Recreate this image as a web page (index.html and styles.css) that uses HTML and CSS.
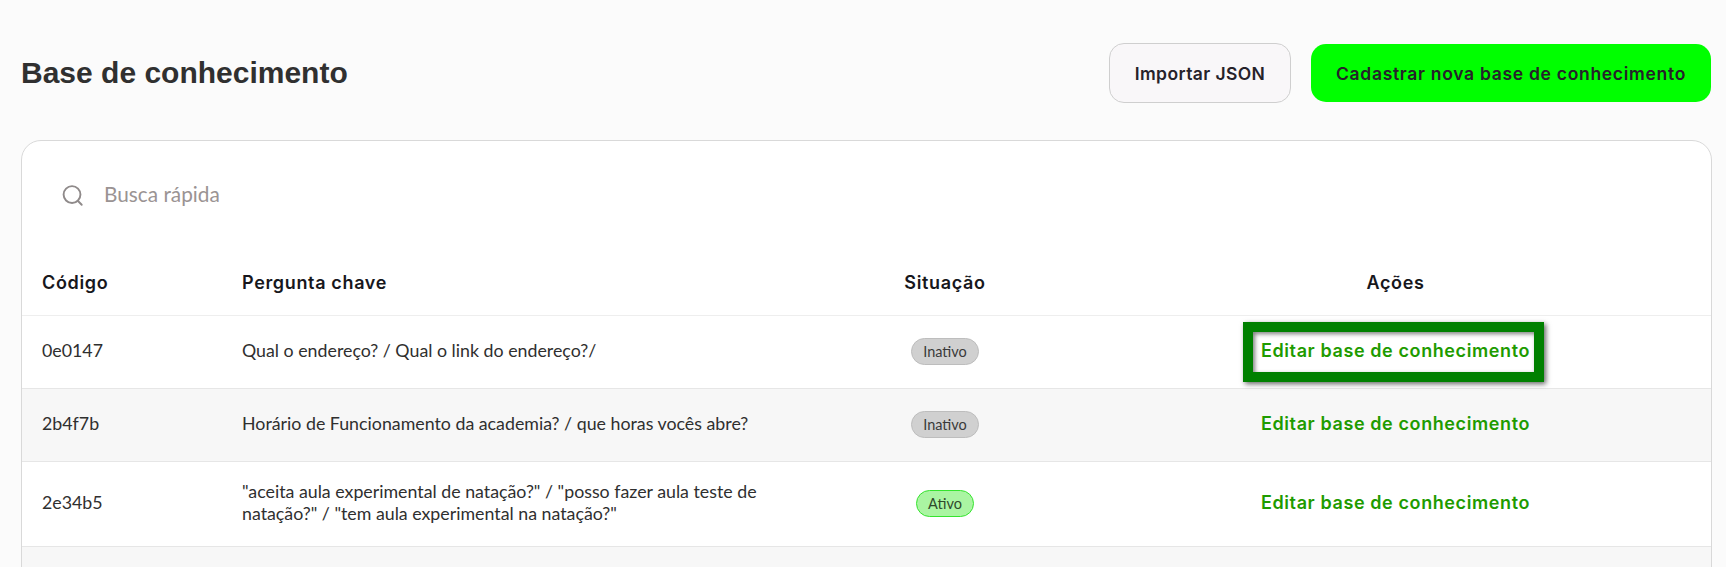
FILE: index.html
```html
<!DOCTYPE html>
<html lang="pt-BR">
<head>
<meta charset="utf-8">
<title>Base de conhecimento</title>
<link rel="stylesheet" href="styles.css">
</head>
<body>
<main class="page">
  <header class="top">
    <h1 class="title">Base de conhecimento</h1>
    <div class="top-actions">
      <button class="btn btn-light" type="button">Importar JSON</button>
      <button class="btn btn-primary" type="button">Cadastrar nova base de conhecimento</button>
    </div>
  </header>
  <section class="card">
    <div class="search">
      <svg class="search-icon" viewBox="0 0 24 24" fill="none" stroke="currentColor" stroke-width="2" stroke-linecap="round"><circle cx="11.5" cy="11" r="8.8"/><path d="M18 18l3.6 3.6"/></svg>
      <input class="search-input" type="text" placeholder="Busca rápida">
    </div>
    <table class="table">
      <thead>
        <tr>
          <th class="col-code">Código</th>
          <th class="col-question">Pergunta chave</th>
          <th class="col-status center">Situação</th>
          <th class="col-actions center">Ações</th>
        </tr>
      </thead>
      <tbody>
        <tr>
          <td>0e0147</td>
          <td>Qual o endereço? / Qual o link do endereço?/</td>
          <td class="center"><span class="pill pill-off">Inativo</span></td>
          <td class="center"><a class="edit edit-focus" href="#">Editar base de conhecimento</a></td>
        </tr>
        <tr>
          <td>2b4f7b</td>
          <td>Horário de Funcionamento da academia? / que horas vocês abre?</td>
          <td class="center"><span class="pill pill-off">Inativo</span></td>
          <td class="center"><a class="edit" href="#">Editar base de conhecimento</a></td>
        </tr>
        <tr>
          <td>2e34b5</td>
          <td>"aceita aula experimental de natação?" / "posso fazer aula teste de natação?" / "tem aula experimental na natação?"</td>
          <td class="center"><span class="pill pill-on">Ativo</span></td>
          <td class="center"><a class="edit" href="#">Editar base de conhecimento</a></td>
        </tr>
        <tr>
          <td></td>
          <td></td>
          <td></td>
          <td></td>
        </tr>
      </tbody>
    </table>
  </section>
</main>
</body>
</html>
```
FILE: styles.css
```css
* { box-sizing: border-box; }
html, body { margin: 0; height: 567px; overflow: hidden; }
body {
  background: #fbfbfb;
  color: #2b2b2b;
  font-family: "Lato", "Noto Sans", sans-serif;
}
.page { padding: 43px 14px 0 21px; }
.top {
  display: flex;
  align-items: center;
  justify-content: space-between;
  height: 60px;
}
.title {
  margin: 0 0 1px 0;
  font: 700 30px/36px "Liberation Sans", Arial, sans-serif;
  color: #303030;
}
.top-actions { display: flex; align-items: center; gap: 20px; margin-right: 1px; }
.btn {
  font-family: "Inter", "Open Sans", sans-serif;
  font-weight: 600;
  font-size: 17.5px;
  color: #26222a;
  border-radius: 15px;
  cursor: pointer;
}
.btn-light {
  width: 182px;
  height: 60px;
  background: #f9f7f9;
  border: 1px solid #cfcfcf;
  letter-spacing: .4px;
}
.btn-primary {
  width: 400px;
  height: 58px;
  background: #00ff00;
  border: 0;
  letter-spacing: .7px;
}
.card {
  margin-top: 37px;
  background: #fff;
  border: 1px solid #d9d9d9;
  border-radius: 20px;
  overflow: hidden;
}
.search {
  display: flex;
  align-items: center;
  height: 109px;
  padding: 0 0 0 39px;
  gap: 20px;
  color: #8f8a8a;
}
.search-icon { width: 23px; height: 23px; flex: none; }
.search-input {
  flex: 1;
  margin-bottom: 4px;
  border: 0;
  outline: 0;
  padding: 0;
  background: transparent;
  font-family: "Lato", "Noto Sans", sans-serif;
  font-size: 20.8px;
  color: #2b2b2b;
}
.search-input::placeholder { color: #9a9393; opacity: 1; }
.table {
  width: 100%;
  table-layout: fixed;
  border-collapse: collapse;
}
.col-code { width: 200px; }
.col-question { width: 588px; }
.col-status { width: 270px; }
.table th {
  height: 65px;
  padding: 0 20px;
  text-align: left;
  font-family: "Inter", "Open Sans", sans-serif;
  font-weight: 600;
  font-size: 18px;
  letter-spacing: .65px;
  color: #17171c;
  border-bottom: 1px solid #eeeeee;
}
.table td {
  height: 73px;
  padding: 18px 20px 22px;
  font-size: 17.8px;
  line-height: 22px;
  color: #2f2f2f;
  border-bottom: 1px solid #e6e6e6;
}
.table tbody tr:nth-child(even) td { background: #f7f7f7; }
.table th.center, .table td.center { text-align: center; padding: 20px; }
.pill {
  display: inline-block;
  height: 27px;
  padding: 0 11px;
  font-size: 14.5px;
  line-height: 25px;
  border-radius: 14px;
  vertical-align: middle;
}
.pill-off { background: #d0d0d0; border: 1px solid #bdbdbd; color: #3a3a3a; }
.pill-on { background: #aaf5a2; border: 1px solid #35e42e; color: #2f4a2c; }
.edit {
  display: inline-block;
  margin-bottom: 2px;
  font-family: "Inter", "Open Sans", sans-serif;
  font-weight: 600;
  font-size: 18px;
  letter-spacing: .6px;
  line-height: 22px;
  color: #1e9b00;
  text-decoration: none;
  white-space: nowrap;
}
.edit-focus {
  margin: -19px -14px -18px -18px;
  padding: 8px 4px 10px 8px;
  border: 10px solid #008000;
  background: #fff;
  box-shadow: 2px 2px 5px rgba(0, 0, 0, .6), inset 2px 2px 4px rgba(0, 0, 0, .5);
}
```
